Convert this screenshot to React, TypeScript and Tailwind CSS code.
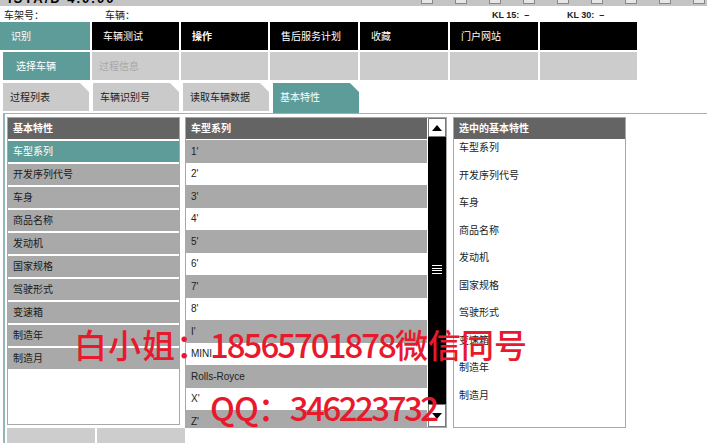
import React from "react";

const TEAL = "bg-[#5e9c99]";

const navTop = [
  { t: "识别", w: "w-[90px]", c: "bg-[#5e9c99]", b: false },
  { t: "车辆测试", w: "w-[87px]", c: "bg-black", b: false },
  { t: "操作", w: "w-[87px]", c: "bg-black", b: true },
  { t: "售后服务计划", w: "w-[88px]", c: "bg-black", b: false },
  { t: "收藏", w: "w-[88px]", c: "bg-black", b: false },
  { t: "门户网站", w: "w-[88px]", c: "bg-black", b: false },
  { t: "", w: "w-[97px]", c: "bg-black", b: false },
];

const leftItems = ["车型系列", "开发序列代号", "车身", "商品名称", "发动机", "国家规格", "驾驶形式", "变速箱", "制造年", "制造月"];
const midItems = ["1'", "2'", "3'", "4'", "5'", "6'", "7'", "8'", "I'", "MINI", "Rolls-Royce", "X'", "Z'"];

function Tab({ label, active }: { label: string; active?: boolean }) {
  return (
    <div
      className={`relative w-[86px] flex items-center pl-[7px] ${active ? "bg-[#5e9c99] text-white h-[30px] pb-[2px]" : "bg-[#cacaca] text-[#222] h-[28px]"}`}
      style={{ clipPath: "polygon(0 0, calc(100% - 9px) 0, 100% 9px, 100% 100%, 0 100%)" }}
    >
      {label}
    </div>
  );
}

export default function App() {
  return (
    <div
      className="relative w-[707px] h-[443px] overflow-hidden bg-white text-[10px] text-[#222]"
      style={{ fontFamily: '"Liberation Sans", "Noto Sans CJK SC", sans-serif' }}
    >
      {/* top title bar (clipped) */}
      <div className="relative h-[6px] bg-[#c4c4c4] overflow-hidden">
        <div className="absolute left-[8px] -top-[11px] text-[13px] font-bold text-black tracking-[2px]">ISTA/D 4.0.00</div>
        <div className="absolute right-0 top-0 flex gap-[22px] pr-[2px]">
          {[0, 1, 2, 3, 4, 5, 6, 7, 8].map((i) => (
            <div key={i} className="w-[12px] h-[4px] bg-[#e6e6e6] border border-[#888] border-t-0" />
          ))}
        </div>
      </div>

      {/* info row */}
      <div className="relative h-[16px]">
        <span className="absolute left-[4px] top-[2px]">车架号：</span>
        <span className="absolute left-[105px] top-[2px]">车辆：</span>
        <span className="absolute left-[492px] top-[3px] font-bold text-[9px]">KL 15:&nbsp;&nbsp;–</span>
        <span className="absolute left-[567px] top-[3px] font-bold text-[9px]">KL 30:&nbsp;&nbsp;–</span>
      </div>

      {/* nav row 1 */}
      <div className="flex gap-[2px] h-[28px]">
        {navTop.map((n, i) => (
          <div key={i} className={`${n.w} ${n.c} text-white flex items-center pl-[11px] ${n.b ? "font-bold" : ""}`}>
            {n.t}
          </div>
        ))}
      </div>

      {/* nav row 2 */}
      <div className="flex gap-[2px] h-[28px] mt-[2px]">
        <div className={`w-[87px] ml-[3px] ${TEAL} text-white flex items-center pl-[13px]`}>选择车辆</div>
        <div className="w-[87px] bg-[#cccccc] text-[#a8a8a8] flex items-center pl-[7px]">过程信息</div>
        <div className="w-[87px] bg-[#cccccc]" />
        <div className="w-[88px] bg-[#cccccc]" />
        <div className="w-[88px] bg-[#cccccc]" />
        <div className="w-[88px] bg-[#cccccc]" />
        <div className="w-[97px] bg-[#cccccc]" />
      </div>

      {/* tabs */}
      <div className="flex items-start gap-[4px] pl-[3px] mt-[3px] h-[30px]">
        <Tab label="过程列表" />
        <Tab label="车辆识别号" />
        <Tab label="读取车辆数据" />
        <Tab label="基本特性" active />
      </div>

      {/* content area */}
      <div className="ml-[3px] border-l-[2px] border-t border-[#8fb8b6] h-[331px] flex pl-[2px] pt-[3px]">
        {/* left panel */}
        <div className="w-[173px] shrink-0 flex flex-col">
          <div className="w-[173px] h-[311px] border border-[#a8a8a8] flex flex-col">
            <div className="h-[21px] bg-[#646464] text-white font-bold flex items-center pl-[5px]">基本特性</div>
            <div className="flex flex-col gap-[2px] mt-[2px]">
              {leftItems.map((t, i) => (
                <div key={t} className={`h-[21px] flex items-center pl-[5px] ${i === 0 ? "bg-[#5e9c99] text-white" : "bg-[#a9a9a9] text-[#1a1a1a]"}`}>
                  {t}
                </div>
              ))}
            </div>
          </div>
          <div className="flex gap-[2px] mt-[3px] w-max">
            <div className="w-[88px] h-[16px] bg-[#cdcdcd]" />
            <div className="w-[88px] h-[16px] bg-[#cdcdcd]" />
          </div>
        </div>

        {/* middle panel */}
        <div className="ml-[5px] w-[262px] shrink-0 h-[311px] border border-[#a8a8a8] flex">
          <div className="w-[242px] flex flex-col overflow-hidden">
            <div className="h-[21px] shrink-0 bg-[#646464] text-white font-bold flex items-center pl-[5px]">车型系列</div>
            <div className="h-[1px] shrink-0 bg-white" />
            {midItems.map((t, i) => (
              <div key={t} className={`h-[22.5px] shrink-0 flex items-center pl-[5px] ${i % 2 === 0 ? "bg-[#a9a9a9]" : "bg-white"}`}>
                {t}
              </div>
            ))}
          </div>
          <div className="w-[18px] ml-[1px] bg-black flex flex-col">
            <div className="h-[19px] shrink-0 bg-white border border-[#777] flex items-center justify-center">
              <svg width="10" height="6" viewBox="0 0 10 6"><path d="M0 6 L5 0 L10 6 Z" fill="#000" /></svg>
            </div>
            <div className="flex flex-col items-center gap-[1.5px] mt-[128px]">
              <div className="w-[10px] h-[1px] bg-white" />
              <div className="w-[10px] h-[1px] bg-white" />
              <div className="w-[10px] h-[1px] bg-white" />
              <div className="w-[10px] h-[1px] bg-white" />
            </div>
            <div className="flex-1" />
            <div className="h-[23px] shrink-0 bg-white border border-[#777] flex items-center justify-center">
              <svg width="10" height="6" viewBox="0 0 10 6"><path d="M0 0 L5 6 L10 0 Z" fill="#000" /></svg>
            </div>
          </div>
        </div>

        {/* right panel */}
        <div className="ml-[6px] w-[173px] shrink-0 h-[311px] border border-[#a8a8a8] flex flex-col">
          <div className="h-[21px] bg-[#646464] text-white font-bold flex items-center pl-[5px]">选中的基本特性</div>
          <div className="flex flex-col">
            {leftItems.map((t) => (
              <div key={t} className="h-[27.5px] pl-[5px] pt-[1px]">{t}</div>
            ))}
          </div>
        </div>
      </div>

      {/* watermark */}
      <div
        className="absolute left-[74px] top-[328px] text-[33px] leading-none text-[#e8192c] whitespace-nowrap font-medium"
        style={{ fontFamily: '"Noto Sans CJK SC", sans-serif' }}
      >
        <span className="tracking-[1px]">白小姐：</span>
        <span className="tracking-[-2px]">18565701878</span>
        <span>微信同号</span>
      </div>
      <div
        className="absolute left-[210px] top-[391px] text-[33px] leading-none text-[#e8192c] whitespace-nowrap font-medium"
        style={{ fontFamily: '"Noto Sans CJK SC", sans-serif' }}
      >
        <span className="tracking-[-1px]">QQ：</span>
        <span className="tracking-[-2.5px]">346223732</span>
      </div>
    </div>
  );
}
